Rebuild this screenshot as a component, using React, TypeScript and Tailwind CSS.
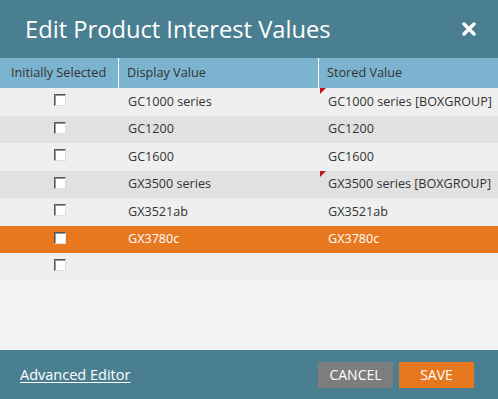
import React from 'react'

const rows = [
  { display: 'GC1000 series', stored: 'GC1000 series [BOXGROUP]', dirty: true },
  { display: 'GC1200', stored: 'GC1200' },
  { display: 'GC1600', stored: 'GC1600' },
  { display: 'GX3500 series', stored: 'GX3500 series [BOXGROUP]', dirty: true },
  { display: 'GX3521ab', stored: 'GX3521ab' },
  { display: 'GX3780c', stored: 'GX3780c', selected: true },
  { display: '', stored: '' },
]

const Checkbox = () => (
  <div className="w-[12px] h-[12px] bg-white border border-t-[#555] border-l-[#555] border-b-[#ddd] border-r-[#ddd] shadow-[inset_1px_1px_0_#999]" />
)

export default function App() {
  return (
    <div
      className="w-[498px] h-[399px] flex flex-col bg-[#f4f4f4] text-[#333]"
      style={{ fontFamily: '"Open Sans", "Liberation Sans", sans-serif' }}
    >
      {/* Title bar */}
      <div className="h-[58px] bg-[#4a7f91] flex items-center justify-between pl-[25px] pr-[22px] shrink-0">
        <h1 className="text-white text-[23.7px] leading-none pt-[2px]">Edit Product Interest Values</h1>
        <svg width="14" height="14" viewBox="0 0 14 14">
          <path d="M2 2L12 12M12 2L2 12" stroke="white" strokeWidth={3.4} strokeLinecap="round" />
        </svg>
      </div>

      {/* Column headers */}
      <div className="h-[30px] bg-[#7cb4cf] flex text-[12.7px] shrink-0">
        <div className="w-[119px] pl-[11px] flex items-center border-r border-white">Initially Selected</div>
        <div className="w-[200px] pl-[8px] flex items-center border-r border-white">Display Value</div>
        <div className="flex-1 pl-[8px] flex items-center">Stored Value</div>
      </div>

      {/* Rows */}
      <div className="flex-1">
        {rows.map((row, i) => {
          const bg = row.selected ? 'bg-[#e8781f] text-white' : i % 2 === 1 ? 'bg-[#e1e1e1]' : 'bg-[#efefef]'
          return (
            <div key={i} className={`h-[27.5px] flex text-[12.6px] ${bg}`}>
              <div className="w-[120px] flex justify-center pt-[6px] pr-[1px]">
                <Checkbox />
              </div>
              <div className="w-[200px] pl-[8px] flex items-center pt-[1px]">{row.display}</div>
              <div className="flex-1 pl-[8px] flex items-center pt-[1px] relative">
                {row.dirty && (
                  <div className="absolute left-0 top-0 w-0 h-0 border-t-[6px] border-t-[#c0141c] border-r-[6px] border-r-transparent" />
                )}
                {row.stored}
              </div>
            </div>
          )
        })}
      </div>

      {/* Footer */}
      <div className="h-[49px] bg-[#4a7f91] flex items-center justify-between pl-[20px] pr-[24px] shrink-0">
        <a href="#" className="text-white text-[14.5px] underline underline-offset-2">Advanced Editor</a>
        <div className="flex gap-[6px]">
          <button className="w-[75px] h-[26px] bg-[#7d7d7d] text-white text-[14px]">CANCEL</button>
          <button className="w-[75px] h-[26px] bg-[#e8781f] text-white text-[14px]">SAVE</button>
        </div>
      </div>
    </div>
  )
}
